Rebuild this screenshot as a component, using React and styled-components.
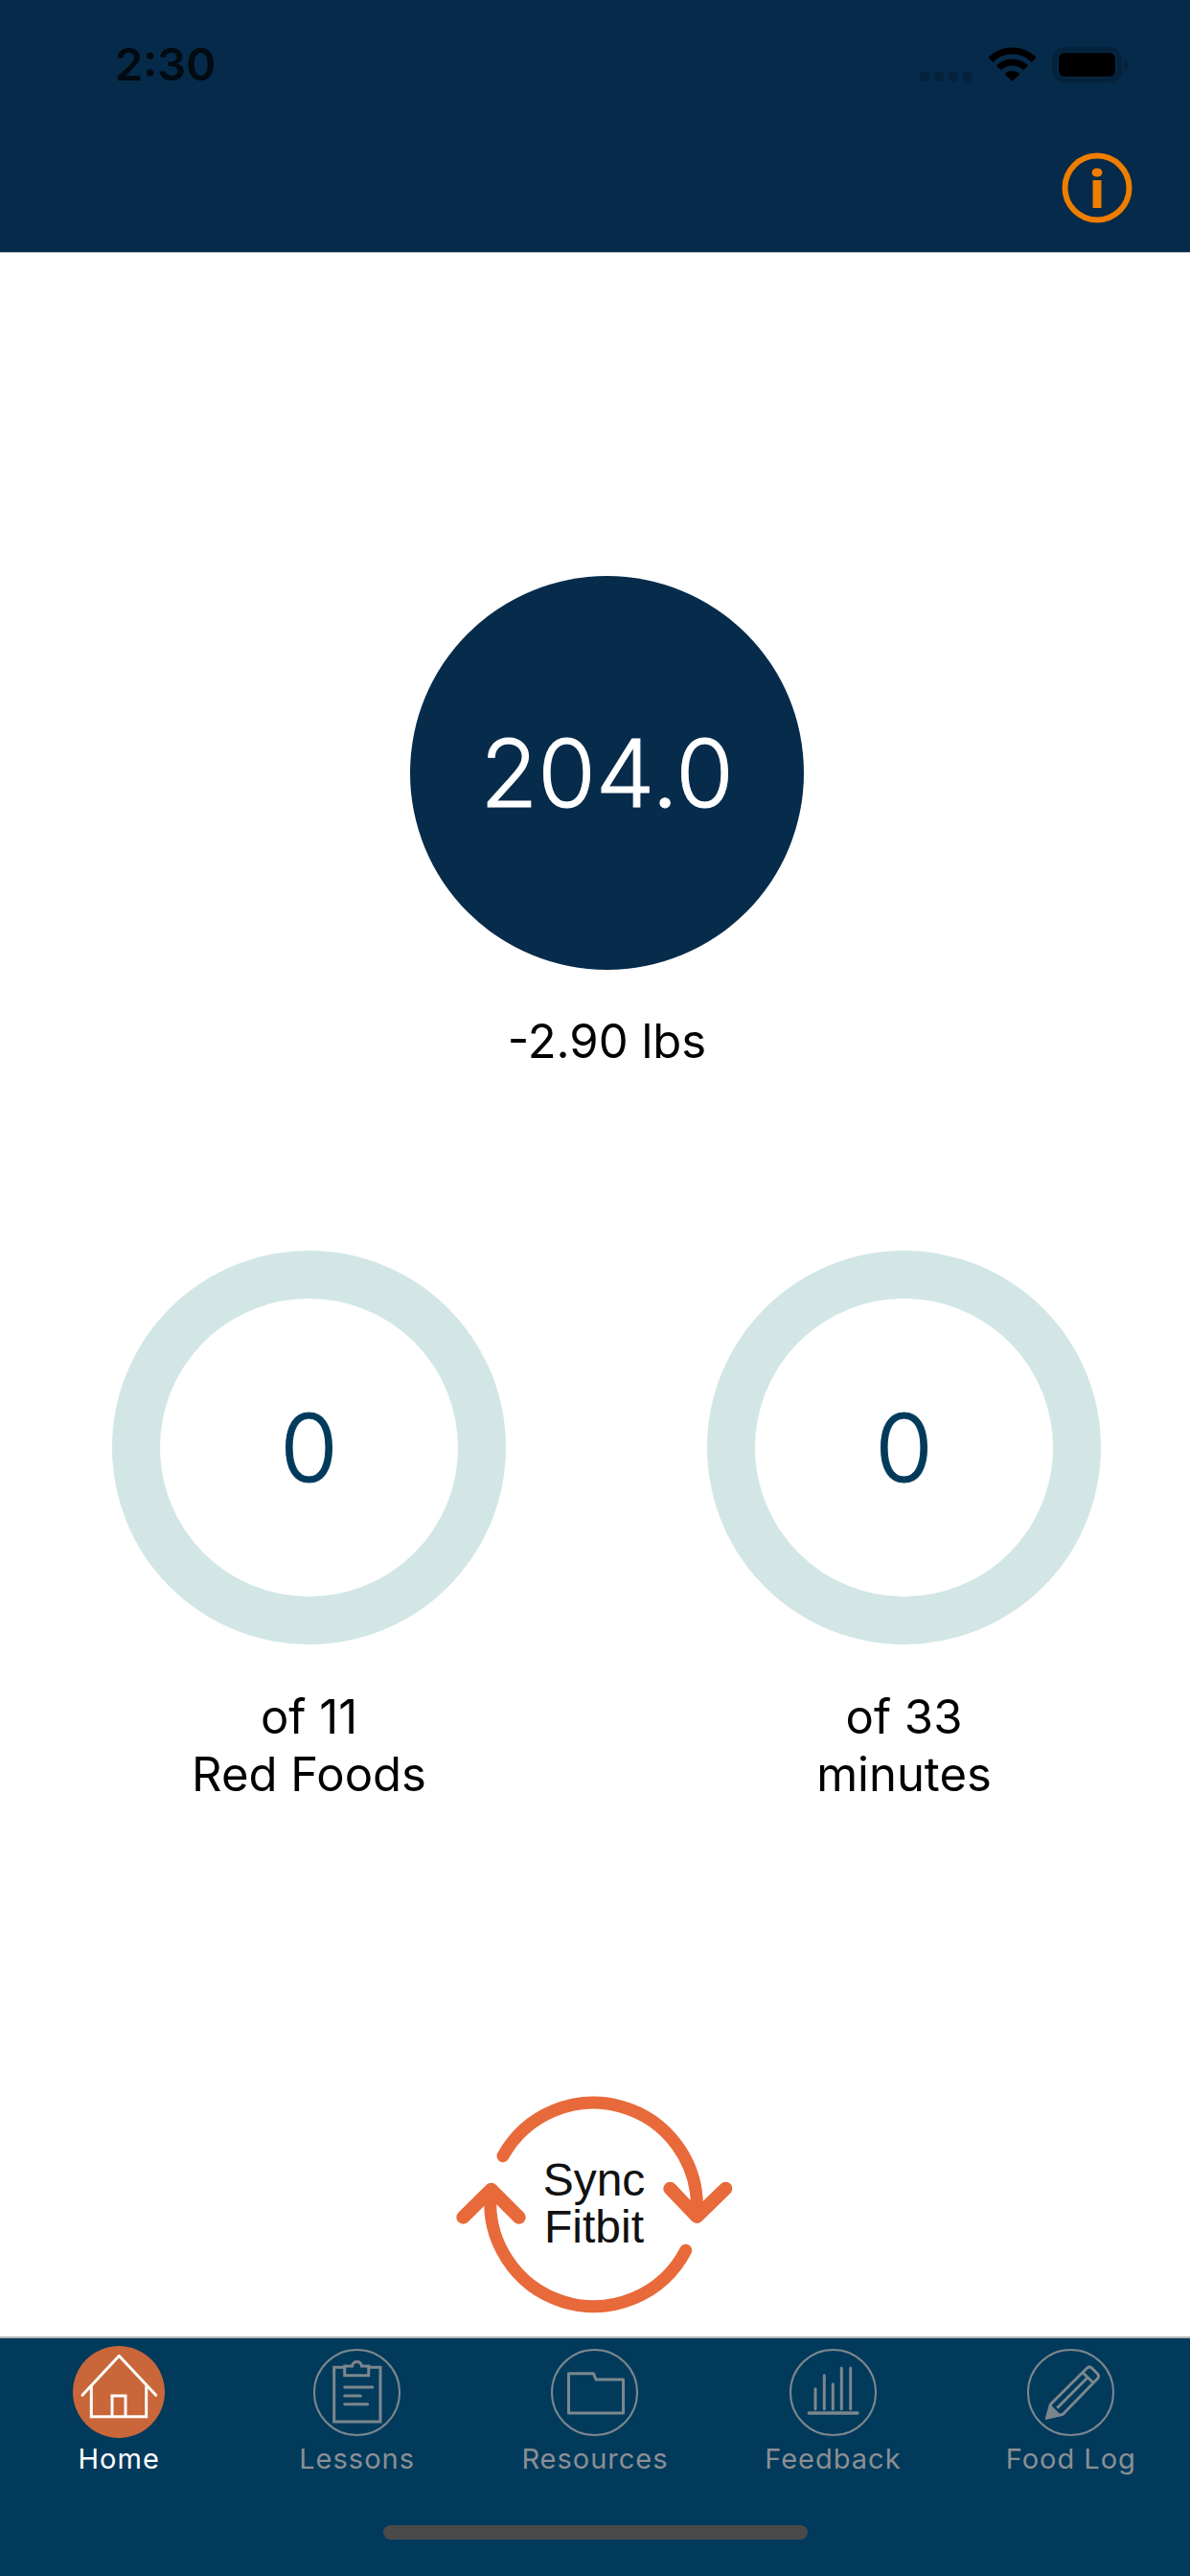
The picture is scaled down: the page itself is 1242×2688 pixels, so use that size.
import styled, { createGlobalStyle } from "styled-components";

const Global = createGlobalStyle`
  html, body { margin: 0; padding: 0; background: #fff; }
  * { box-sizing: border-box; }
  body { font-family: Inter, "Noto Sans", sans-serif; }
`

const Page = styled.div`width: 1242px; height: 2688px; display: flex; flex-direction: column; overflow: hidden; background: #fff;`

const Header = styled.header`height: 264px; flex: none; background: #062a49; border-bottom: 1px solid #c4c6c8; display: flex; flex-direction: column;`
const StatusBar = styled.div`display: flex; align-items: flex-start; justify-content: space-between; padding: 49px 71px 0 120px; height: 156px;`
const Time = styled.div`font-size: 47px; font-weight: 600; line-height: 36px; color: #020a12;`
const StatusIcons = styled.div`display: flex; align-items: flex-start;`
const Dots = styled.div`display: flex; gap: 5px; margin: 26px 17px 0 0;`
const Dot = styled.span`width: 10px; height: 10px; border-radius: 4px; background: #04223c;`
const Battery = styled.div`position: relative; width: 73px; height: 37px; margin-left: 17px; border: 5px solid #04223c; border-radius: 13px; padding: 1px 2px;`
const BatteryFill = styled.div`width: 100%; height: 100%; background: #000; border-radius: 6px;`
const BatteryNub = styled.span`position: absolute; right: -12px; top: 8px; width: 5px; height: 12px; border-radius: 0 6px 6px 0; background: #04223c;`
const HeaderActions = styled.div`display: flex; justify-content: flex-end; padding-right: 57px;`

const Main = styled.main`flex: 1; display: flex; flex-direction: column; align-items: center; padding-top: 337px;`
const WeightCircle = styled.div`width: 411px; height: 411px; margin-left: 25px; border-radius: 50%; background: #072b4b; color: #fff; display: flex; align-items: center; justify-content: center; font-size: 98px; font-weight: 300; -webkit-text-stroke: 1px currentColor; line-height: 1;`
const WeightChange = styled.div`margin: 45px 0 0 25px; font-size: 49px; line-height: 60px; color: #000;`
const Goals = styled.div`display: flex; gap: 210px; margin: 188px 0 0 24px;`
const Goal = styled.div`width: 411px; display: flex; flex-direction: column; align-items: center;`
const Ring = styled.div`width: 411px; height: 411px; border-radius: 50%; border: 50px solid #d2e6e6; color: #023a5c; display: flex; align-items: center; justify-content: center; font-size: 98px; font-weight: 300; -webkit-text-stroke: 1px currentColor; line-height: 1;`
const GoalLabel = styled.div`margin-top: 46px; font-size: 49px; line-height: 60px; text-align: center; color: #000;`

const SyncButton = styled.div`position: relative; width: 340px; height: 260px; margin: auto 2px 9px 0; flex: none;`
const SyncText = styled.div`position: absolute; inset: 0; display: flex; align-items: center; justify-content: center; text-align: center; font-family: "Liberation Sans", Arial, sans-serif; font-size: 48px; line-height: 49px; color: #111;`

const TabBar = styled.nav`height: 250px; flex: none; background: #023a5c; border-top: 2px solid #b4b6b8; display: flex; flex-direction: column;`
const Tabs = styled.div`display: grid; grid-template-columns: repeat(5, 1fr); padding-top: 8px;`
const Tab = styled.div`display: flex; flex-direction: column; align-items: center;`
const TabBadge = styled.div`width: ${(p) => (p.$active ? 96 : 91)}px; height: ${(p) => (p.$active ? 96 : 91)}px; margin: ${(p) => (p.$active ? 0 : "2.5px")} 0; border-radius: 50%; background: ${(p) => (p.$active ? "#c9663a" : "transparent")}; border: ${(p) => (p.$active ? "none" : "2px solid #7c878d")};`
const TabLabel = styled.span`margin-top: 2px; font-size: 29px; font-weight: 400; line-height: 40px; letter-spacing: 1px; white-space: nowrap; color: ${(p) => (p.$active ? "#fff" : "#8b8f92")};`
const HomeIndicator = styled.div`width: 443px; height: 15px; margin: 49px auto 0; border-radius: 8px; background: #4a4a4a;`

const Glyph = styled.svg`display: block; fill: none; stroke: ${(p) => p.$color || "#7c878d"}; stroke-width: 3;`

const WifiIcon = () => (
  <svg width="49" height="36" viewBox="0 0 49 36" style={{ display: "block" }}>
    <path d="M1.9 13.4A32 32 0 0 1 47.1 13.4" fill="none" stroke="#000" strokeWidth="7" />
    <path d="M10.36 21.86A20 20 0 0 1 38.64 21.86" fill="none" stroke="#000" strokeWidth="7" />
    <path d="M24.5 36L16.7 28.2A11 11 0 0 1 32.3 28.2Z" fill="#000" />
  </svg>
)

const InfoIcon = () => (
  <svg width="80" height="80" viewBox="0 0 80 80" style={{ display: "block" }}>
    <circle cx="40" cy="40" r="33.5" fill="none" stroke="#ee7d00" strokeWidth="6" />
    <ellipse cx="40" cy="24" rx="5.5" ry="4.5" fill="#ee7d00" />
    <rect x="35.5" y="32" width="9" height="29" fill="#ee7d00" />
  </svg>
)

const SyncArrows = () => (
  <svg width="340" height="260" viewBox="0 0 340 260" style={{ display: "block" }} fill="none" stroke="#e8693a" strokeLinecap="round" strokeLinejoin="round">
    <path d="M75 80.7A108 108 0 0 1 277.3 137.3" strokeWidth="13" />
    <path d="M249.3 114.7L277.3 144L307.3 114.7" strokeWidth="14" />
    <path d="M265.7 179.3A108 108 0 0 1 62.7 115.7" strokeWidth="13" />
    <path d="M33.3 144.7L62.7 115.7L91.7 144.7" strokeWidth="14" />
  </svg>
)

const HomeIcon = () => (
  <Glyph width="96" height="96" viewBox="0 0 96 96" $color="#fff">
    <path d="M10 51.3L48.3 10.3L86.7 51.3" strokeLinecap="round" strokeLinejoin="round" />
    <path d="M19.3 42V73.7H76.7V42" />
    <path d="M41 73.7V52H55V73.7" />
  </Glyph>
)

const ClipboardIcon = () => (
  <Glyph width="87" height="87" viewBox="2 2 87 87">
    <path d="M32.7 19.3H21.7V76H70V19.3H57.7" />
    <path d="M32.7 18V27.7H57.7V18H50.5C49.5 12 41.5 12 40.5 18Z" />
    <path d="M32.7 40H61.7M32.7 49H49.3M32.7 57.7H56.7" strokeLinecap="round" />
  </Glyph>
)

const FolderIcon = () => (
  <Glyph width="87" height="87" viewBox="2 2 87 87">
    <path d="M18.5 25.7H44.5L47 32H75.5V67H18.5Z" strokeLinejoin="round" />
  </Glyph>
)

const ChartIcon = () => (
  <Glyph width="87" height="87" viewBox="2 2 87 87">
    <path d="M27 41.7V62.7M36.3 27.7V62.7M45.3 36.7V62.7M54.3 20V62.7M63.7 20V62.7" strokeLinecap="round" />
    <path d="M20.3 67H71" strokeWidth="3.4" strokeLinecap="round" />
  </Glyph>
)

const PencilIcon = () => (
  <Glyph width="87" height="87" viewBox="2 2 87 87">
    <path d="M25 57.3L62 20.5C64 18.5 66 18.5 67.5 20L73.5 26C75 27.5 75 29.5 73.5 31L37.3 68.3L20.7 72Z" strokeLinejoin="round" />
    <path d="M58.3 25L69.7 36M31.3 61.7L64 29" />
    <path d="M20.7 72L24 60L33 69Z" fill="#7c878d" />
  </Glyph>
)

const tabs = [
  { label: "Home", icon: <HomeIcon />, active: true },
  { label: "Lessons", icon: <ClipboardIcon /> },
  { label: "Resources", icon: <FolderIcon /> },
  { label: "Feedback", icon: <ChartIcon /> },
  { label: "Food Log", icon: <PencilIcon /> },
]

const App = () => {
  return (
    <Page>
      <Global />
      <Header>
        <StatusBar>
          <Time>2:30</Time>
          <StatusIcons>
            <Dots><Dot /><Dot /><Dot /><Dot /></Dots>
            <WifiIcon />
            <Battery>
              <BatteryFill />
              <BatteryNub />
            </Battery>
          </StatusIcons>
        </StatusBar>
        <HeaderActions>
          <InfoIcon />
        </HeaderActions>
      </Header>
      <Main>
        <WeightCircle>204.0</WeightCircle>
        <WeightChange>-2.90 lbs</WeightChange>
        <Goals>
          <Goal>
            <Ring>0</Ring>
            <GoalLabel>of 11<br />Red Foods</GoalLabel>
          </Goal>
          <Goal>
            <Ring>0</Ring>
            <GoalLabel>of 33<br />minutes</GoalLabel>
          </Goal>
        </Goals>
        <SyncButton>
          <SyncArrows />
          <SyncText>Sync<br />Fitbit</SyncText>
        </SyncButton>
      </Main>
      <TabBar>
        <Tabs>
          {tabs.map((t) => (
            <Tab key={t.label}>
              <TabBadge $active={t.active}>{t.icon}</TabBadge>
              <TabLabel $active={t.active}>{t.label}</TabLabel>
            </Tab>
          ))}
        </Tabs>
        <HomeIndicator />
      </TabBar>
    </Page>
  )
}

export default App
